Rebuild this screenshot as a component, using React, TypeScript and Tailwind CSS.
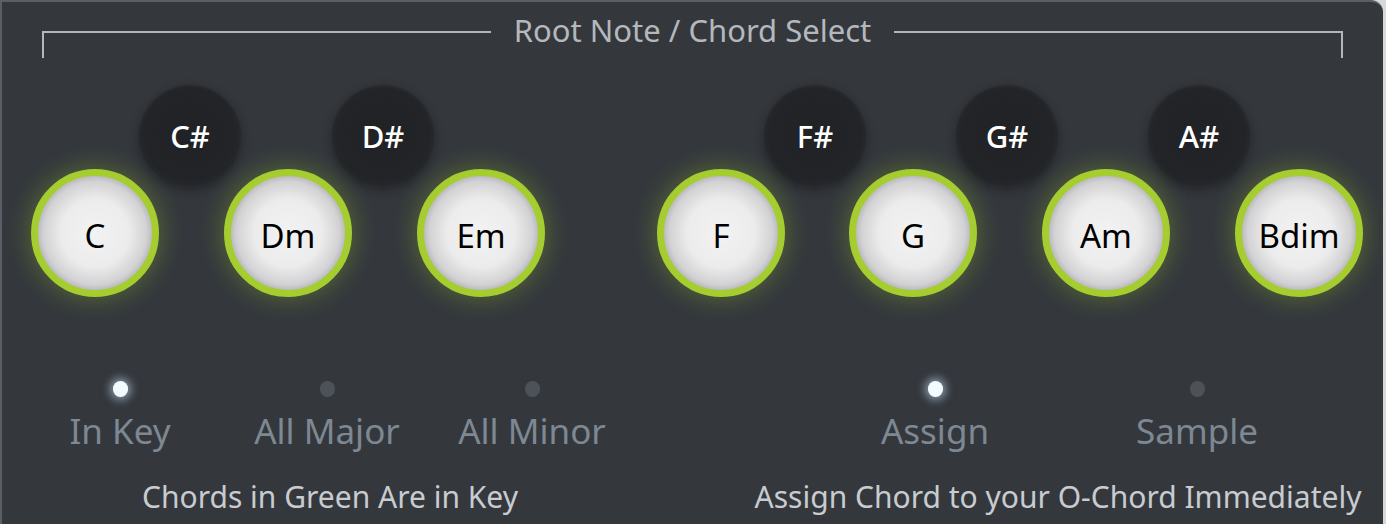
const naturals = [
  { name: "C", ml: "ml-[29px]" },
  { name: "Dm", ml: "ml-[65px]" },
  { name: "Em", ml: "ml-[65px]" },
  { name: "F", ml: "ml-[112px]" },
  { name: "G", ml: "ml-[64px]" },
  { name: "Am", ml: "ml-[65px]" },
  { name: "Bdim", ml: "ml-[65px]" },
];

const sharps = [
  { name: "C#", ml: "ml-[136px]" },
  { name: "D#", ml: "ml-[89px]" },
  { name: "F#", ml: "ml-[328px]" },
  { name: "G#", ml: "ml-[88px]" },
  { name: "A#", ml: "ml-[88px]" },
];

function SharpPad({ name, ml }: { name: string; ml: string }) {
  return (
    <div
      className={`${ml} flex h-[104px] w-[104px] shrink-0 items-center justify-center rounded-full bg-[radial-gradient(circle,#202226_0%,#222428_62%,#292c30_78%,#3b3f44_100%)] shadow-[0_4px_10px_rgba(0,0,0,0.3),inset_0_2px_3px_rgba(255,255,255,0.07)]`}
    >
      <span className="pt-[2px] text-[31px] font-medium leading-none text-white">{name}</span>
    </div>
  );
}

function ChordPad({ name, ml }: { name: string; ml: string }) {
  return (
    <div
      className={`${ml} relative z-10 flex h-[128px] w-[128px] shrink-0 items-center justify-center rounded-full border-[7px] border-[#a5cd2f] bg-[radial-gradient(circle,#f2f2f2_0%,#ececec_42%,#d2d2d4_64%,#88898e_86%,#505156_100%)] shadow-[0_0_22px_4px_rgba(160,200,40,0.28)]`}
    >
      <span className="pt-[4px] text-[33px] leading-none text-black">{name}</span>
    </div>
  );
}

function Radio({ label, on, w, ml }: { label: string; on: boolean; w: string; ml: string }) {
  return (
    <div className={`${ml} ${w} flex shrink-0 flex-col items-center`}>
      <div
        className={
          on
            ? "h-[16px] w-[15px] rounded-full bg-[#f4fbff] shadow-[0_0_8px_3px_rgba(200,230,255,0.55)]"
            : "h-[16px] w-[15px] rounded-full bg-[#4d5259]"
        }
      />
      <span className="mt-[12px] text-[35px] leading-[44px] text-[#7d8893]">{label}</span>
    </div>
  );
}

export default function App() {
  return (
    <div className="h-[524px] w-[1386px] overflow-hidden bg-[#d8d8d8] font-['Noto_Sans',sans-serif]">
      <div className="h-[540px] w-[1383px] rounded-tr-[12px] border-l-2 border-t-2 border-[#5b5f64] bg-[#34383d]">
        {/* header bracket */}
        <div className="mx-[40px] mt-[29px] flex items-start">
          <div className="h-[27px] flex-1 border-l-2 border-t-2 border-[#b3b7bb]" />
          <span className="-mt-[22px] px-[23px] text-[31px] leading-[42px] text-[#b4b8bc]">
            Root Note / Chord Select
          </span>
          <div className="h-[27px] flex-1 border-r-2 border-t-2 border-[#b3b7bb]" />
        </div>

        {/* sharps */}
        <div className="mt-[25px] flex">
          {sharps.map((s) => (
            <SharpPad key={s.name} {...s} />
          ))}
        </div>

        {/* naturals */}
        <div className="-mt-[18px] flex">
          {naturals.map((n) => (
            <ChordPad key={n.name} {...n} />
          ))}
        </div>

        {/* modes */}
        <div className="mt-[84px] flex">
          <Radio label="In Key" on w="w-[200px]" ml="ml-[18px]" />
          <Radio label="All Major" on={false} w="w-[200px]" ml="ml-[7px]" />
          <Radio label="All Minor" on={false} w="w-[200px]" ml="ml-[5px]" />
          <Radio label="Assign" on w="w-[200px]" ml="ml-[203px]" />
          <Radio label="Sample" on={false} w="w-[200px]" ml="ml-[62px]" />
        </div>

        <div className="mt-[23px] flex text-[30px] leading-[42px] text-[#c8ccd0]">
          <div className="w-[656px] shrink-0 text-center">Chords in Green Are in Key</div>
          <div className="w-[800px] shrink-0 text-center">Assign Chord to your O-Chord Immediately</div>
        </div>
      </div>
    </div>
  );
}
